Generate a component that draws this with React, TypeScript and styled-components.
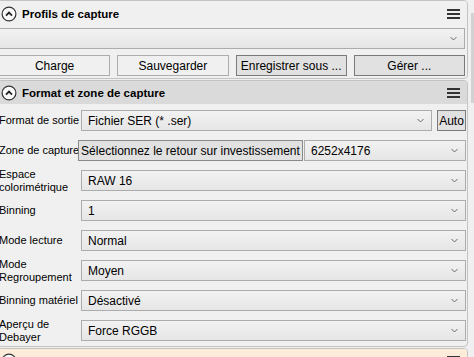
import styled, { createGlobalStyle } from 'styled-components'

const GlobalStyle = createGlobalStyle`
  body {
    margin: 0;
    background: #f0f0f0;
    font-family: "Liberation Sans", Arial, sans-serif;
    font-size: 12px;
    color: #000000;
    overflow: hidden;
  }
`

const Frame = styled.div`
  display: flex;
  width: 474px;
  height: 357px;
  overflow: hidden;
`
const Panel = styled.div`
  flex: 0 0 471px;
  margin-left: -3px;
  display: flex;
  flex-direction: column;
  gap: 1px;
`
const ScrollTrack = styled.div`
  flex: 1;
  padding: 13px 0 0 3px;
  background: #f0f0f0;
`
const ScrollThumb = styled.div`
  height: 90px;
  background: #d2d2d2;
`
const Section = styled.div`
  border: 1px solid #c3c3c3;
  border-radius: 4px;
  overflow: hidden;
  flex-shrink: 0;
`
const Header = styled.div<{ $tone: 'plain' | 'active' | 'warm' }>`
  display: flex;
  align-items: center;
  gap: 5px;
  height: ${(p) => (p.$tone === 'plain' ? 25 : 23)}px;
  padding: 0 7px 0 3px;
  background: ${(p) =>
    p.$tone === 'active' ? '#dadada' : p.$tone === 'warm' ? '#fcecd9' : '#f0f0f0'};
  font-size: 11.5px;
  font-weight: bold;
`
const HeaderTitle = styled.span`
  flex: 1;
`
const ProfileBody = styled.div`
  display: flex;
  flex-direction: column;
  gap: 6px;
  padding: 2px 2px 2px 1px;
`
const ButtonRow = styled.div`
  display: grid;
  grid-template-columns: repeat(4, 1fr);
  gap: 7px;
`
const Button = styled.div<{ $strong?: boolean }>`
  height: 21px;
  box-sizing: border-box;
  display: flex;
  align-items: center;
  justify-content: center;
  border: 1px solid ${(p) => (p.$strong ? '#7a7a7a' : '#adadad')};
  background: ${(p) => (p.$strong ? '#e1e1e1' : '#f0f0f0')};
  white-space: nowrap;
  overflow: hidden;
`
const WideButton = styled(Button)`
  width: 225px;
  flex-shrink: 0;
  margin-left: -3px;
  border-color: #8a8a8a;
  background: #e1e1e1;
`
const AutoButton = styled(Button)`
  width: 29px;
  flex-shrink: 0;
  border-color: #7a7a7a;
  background: #e1e1e1;
`
const Combo = styled.div`
  flex: 1 1 auto;
  min-width: 0;
  height: 21px;
  box-sizing: border-box;
  display: flex;
  align-items: center;
  padding: 0 7px 0 6px;
  border: 1px solid #acacac;
  background: linear-gradient(#f2f2f2, #e6e6e6);
  white-space: nowrap;
`
const ComboText = styled.span`
  flex: 1;
`
const FormBody = styled.div`
  display: flex;
  flex-direction: column;
  gap: 9px;
  padding: 6px 1px 5px 0;
`
const FormRow = styled.div`
  display: grid;
  grid-template-columns: 83px 1fr;
  grid-template-rows: 21px;
  align-items: center;
`
const Label = styled.div`
  font-size: 11px;
  line-height: 13px;
  margin-left: 1px;
  white-space: nowrap;
`
const Field = styled.div<{ $gap: number }>`
  display: flex;
  align-items: center;
  gap: ${(p) => p.$gap}px;
`

const CollapseIcon = () => (
  <svg width="16" height="16" viewBox="0 0 16 16">
    <circle cx="8" cy="8" r="6.9" fill="#fafafa" stroke="#333" strokeWidth="1.2" />
    <path d="M5 9.6 L8 6.6 L11 9.6" fill="none" stroke="#222" strokeWidth="1.8" />
  </svg>
)

const MenuIcon = () => (
  <svg width="13" height="10" viewBox="0 0 13 10">
    <rect x="0" y="0" width="13" height="2" fill="#333" />
    <rect x="0" y="4" width="13" height="2" fill="#333" />
    <rect x="0" y="8" width="13" height="2" fill="#333" />
  </svg>
)

const Chevron = () => (
  <svg width="7" height="5" viewBox="0 0 7 5">
    <path d="M0.5 1 L3.5 4 L6.5 1" fill="none" stroke="#6a6a6a" strokeWidth="1" />
  </svg>
)

const Select = ({ value }: { value: string }) => (
  <Combo>
    <ComboText>{value}</ComboText>
    <Chevron />
  </Combo>
)

type RowProps = { label: React.ReactNode; value: string }

const rows: RowProps[] = [
  { label: <>Espace<br />colorimétrique</>, value: 'RAW 16' },
  { label: 'Binning', value: '1' },
  { label: 'Mode lecture', value: 'Normal' },
  { label: <>Mode<br />Regroupement</>, value: 'Moyen' },
  { label: 'Binning matériel', value: 'Désactivé' },
  { label: <>Aperçu de<br />Debayer</>, value: 'Force RGGB' },
]

const App = () => {
  return (
    <>
      <GlobalStyle />
      <Frame>
        <Panel>
          <Section>
            <Header $tone="plain">
              <CollapseIcon />
              <HeaderTitle>Profils de capture</HeaderTitle>
              <MenuIcon />
            </Header>
            <ProfileBody>
              <Select value="" />
              <ButtonRow>
                <Button>Charge</Button>
                <Button>Sauvegarder</Button>
                <Button $strong>Enregistrer sous ...</Button>
                <Button $strong>Gérer ...</Button>
              </ButtonRow>
            </ProfileBody>
          </Section>

          <Section>
            <Header $tone="active">
              <CollapseIcon />
              <HeaderTitle>Format et zone de capture</HeaderTitle>
              <MenuIcon />
            </Header>
            <FormBody>
              <FormRow>
                <Label>Format de sortie</Label>
                <Field $gap={5}>
                  <Select value="Fichier SER (* .ser)" />
                  <AutoButton>Auto</AutoButton>
                </Field>
              </FormRow>
              <FormRow>
                <Label>Zone de capture</Label>
                <Field $gap={1}>
                  <WideButton>Sélectionnez le retour sur investissement</WideButton>
                  <Select value="6252x4176" />
                </Field>
              </FormRow>
              {rows.map((row, i) => (
                <FormRow key={i}>
                  <Label>{row.label}</Label>
                  <Select value={row.value} />
                </FormRow>
              ))}
            </FormBody>
          </Section>

          <Section>
            <Header $tone="warm">
              <CollapseIcon />
              <HeaderTitle>Contrôles de la caméra</HeaderTitle>
              <MenuIcon />
            </Header>
          </Section>
        </Panel>
        <ScrollTrack>
          <ScrollThumb />
        </ScrollTrack>
      </Frame>
    </>
  )
}

export default App
